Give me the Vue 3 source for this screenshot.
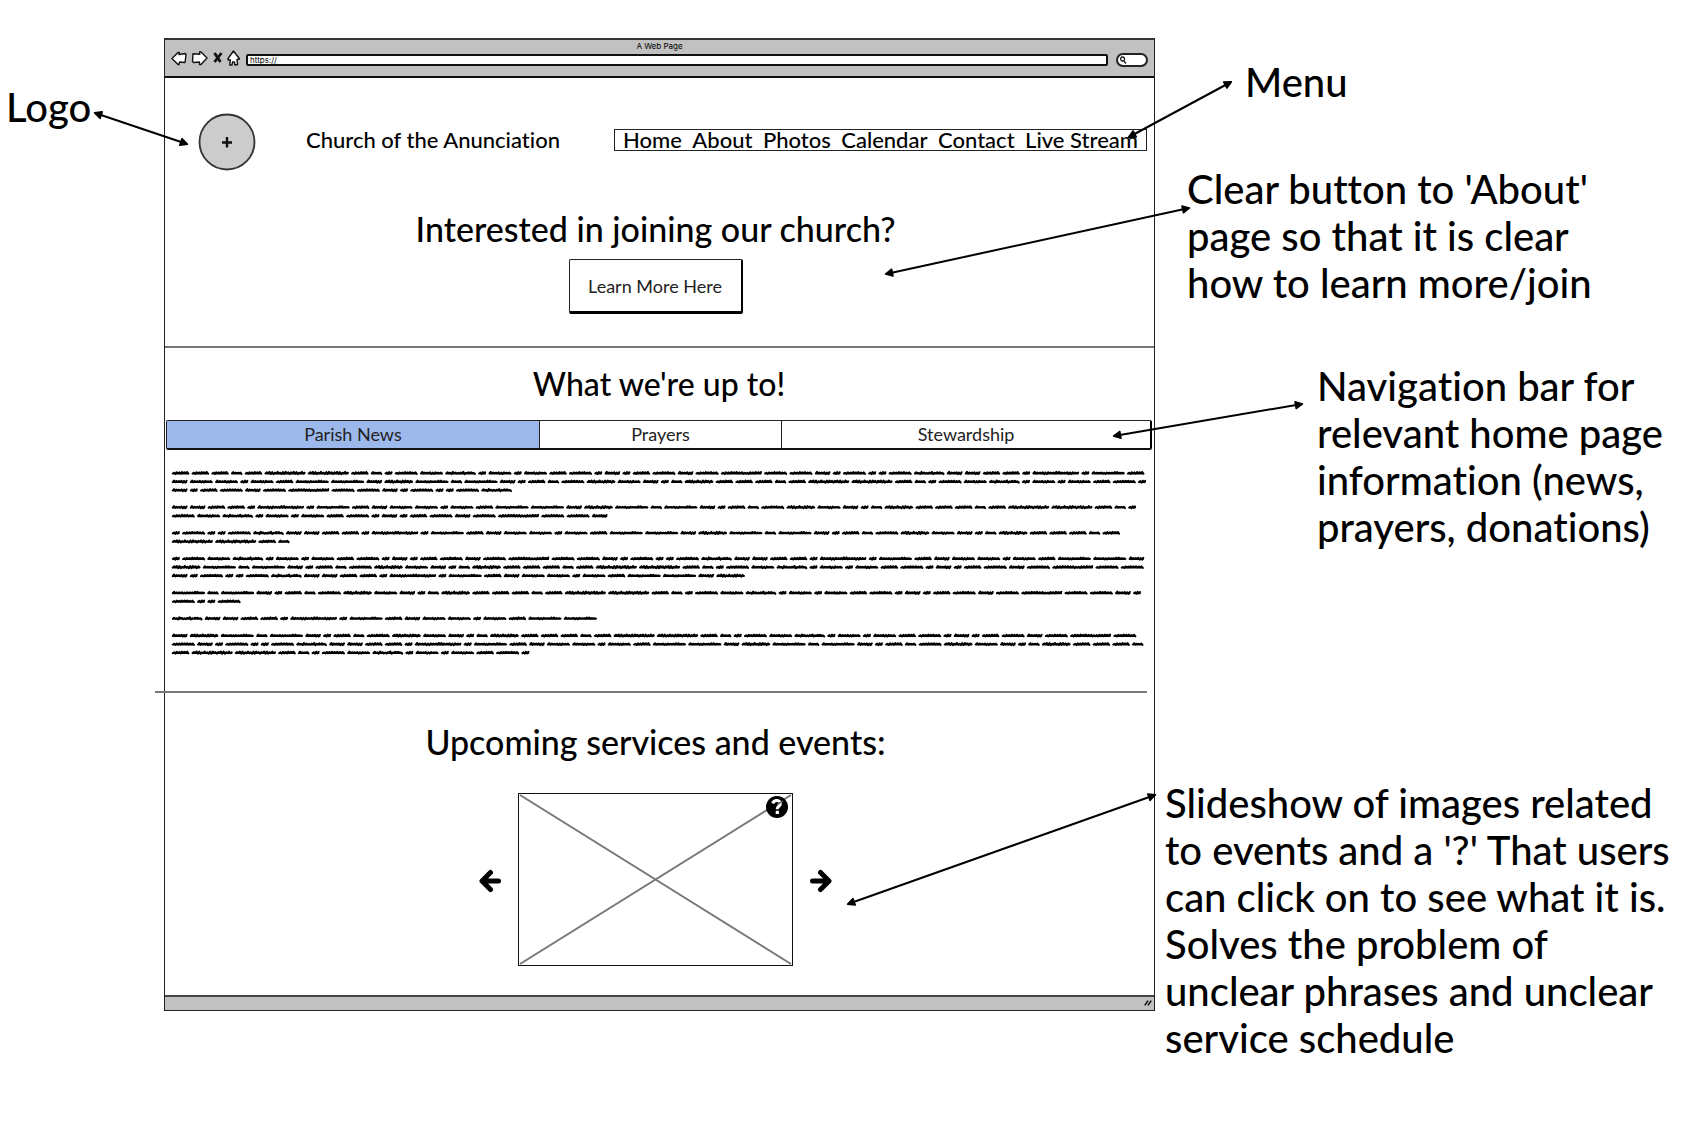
<script setup>
const menu = ['Home', 'About', 'Photos', 'Calendar', 'Contact', 'Live Stream']

const tabs = [
  { id: 'news', label: 'Parish News', active: true },
  { id: 'prayers', label: 'Prayers', active: false },
  { id: 'stewardship', label: 'Stewardship', active: false }
]

const notes = [
  { id: 'menu', text: 'Menu' },
  { id: 'about', text: "Clear button to 'About'\npage so that it is clear\nhow to learn more/join" },
  { id: 'tabs', text: 'Navigation bar for\nrelevant home page\ninformation (news,\nprayers, donations)' },
  {
    id: 'slides',
    text: "Slideshow of images related\nto events and a '?' That users\ncan click on to see what it is.\nSolves the problem of\nunclear phrases and unclear\nservice schedule"
  }
]

const pointers = [
  [95, 113, 187, 144],
  [1231, 82, 1129, 137],
  [1189, 208, 886, 274],
  [1302, 404, 1114, 436],
  [1155, 795, 848, 904]
]

// Scribbled filler copy: each letter is a word of a given width, repeated in a cycle.
const wordPitch = { E: 10.25, C: 13.7, B: 17.95, A: 19.78, F: 25.34, G: 25.34, M: 31, H: 33, L: 35.5, D: 43.4, J: 43.4, K: 49 }
const cycle = 'AAACADDACEFGHEGEGAFEBEAFBFJFFBEFEEFHBBAAEKELABGGEGALLBMLCLBEACFMGBECM'
const gap = 2.6
const rowStep = 60 / 7
const paragraphs = [[45, 44, 16], [43, 20], [44, 4], [45, 44, 26], [45, 4], [18], [44, 45, 16]]

function scribble(kind, x, y) {
  const w = wordPitch[kind] - gap
  const seed = kind.charCodeAt(0)
  const n = Math.max(5, Math.round(w / 1.4))
  let d = `M${(x + 0.8).toFixed(1)} ${(y + 0.5).toFixed(1)}`
  for (let i = 1; i <= n; i++) {
    const amp = 0.2 + ((seed * 7 + i * i * 5) % 9) / 9
    const px = x + 0.8 + ((w - 1.6) * i) / n
    d += `L${px.toFixed(1)} ${(y + (i % 2 ? -amp : amp)).toFixed(1)}`
  }
  return d + `M${(x + 1).toFixed(1)} ${(y + 0.4).toFixed(1)}h${(w - 2).toFixed(1)}`
}

function layOut() {
  const paths = []
  let word = 0
  let row = 0
  for (const rows of paragraphs) {
    for (const count of rows) {
      let x = 1
      let d = ''
      for (let i = 0; i < count; i++) {
        const kind = cycle[word % cycle.length]
        d += scribble(kind, x, 4 + row * rowStep)
        x += wordPitch[kind]
        word++
      }
      paths.push(d)
      row++
    }
    row++
  }
  return paths
}

const copyRows = layOut()
const copyHeight = 188
</script>

<template>
  <main class="board">
    <aside class="left-note">
      <p class="note">Logo</p>
    </aside>

    <section class="window">
      <div class="chrome">
        <p class="chrome-title">A Web Page</p>
        <div class="toolbar">
          <svg class="tools" viewBox="0 0 72 18" aria-hidden="true">
            <g fill="#fff" stroke="#111" stroke-width="1.4" stroke-linejoin="round">
              <path d="M2 9.500 8 3.500 9.300 3.500 9 5.500 15.500 4.500 16 6 15 13.500 9.500 13 9 15.500 8 15.500Z" />
              <path d="M37 9 31 3 29.500 3 29.800 5.300 23 4.800 22.500 12.500 23.500 13.500 29.500 13 29.500 15.500 31 15.500Z" />
              <path d="M63.500 2 58 9.500 58.300 11 60.300 10.800 59.800 16 62 16 62.500 13 64.300 13 65 16 67.500 15.500 67 10.500 69.500 10 68.500 8.500Z" />
            </g>
            <path d="M44.500 4 50.500 13M51.500 4 44.500 13" fill="none" stroke="#111" stroke-width="2.800" />
          </svg>
          <input class="url" type="text" value="https://" aria-label="Address" />
          <label class="search">
            <svg viewBox="0 0 8 8" aria-hidden="true">
              <path d="M3.500 1a2 2 0 1 0 .1 0M4.800 5 7 7.500" fill="none" stroke="#111" stroke-width="1.300" />
            </svg>
            <input type="search" aria-label="Search" />
          </label>
        </div>
      </div>

      <header class="masthead">
        <svg class="logo" viewBox="0 0 58 58" role="img" aria-label="Logo">
          <circle cx="29" cy="29" r="27.500" fill="#ccc" stroke="#333" stroke-width="1.800" />
          <path d="M29 24V34.500M24 29.500H34" stroke="#111" stroke-width="2.400" />
        </svg>
        <p class="site-name">Church of the Anunciation</p>
        <nav class="site-menu" aria-label="Main">
          <a v-for="item in menu" :key="item" href="#">{{ item }}</a>
        </nav>
      </header>

      <section class="hero">
        <h1>Interested in joining our church?</h1>
        <button type="button" class="cta">Learn More Here</button>
      </section>
      <hr />

      <section class="updates">
        <h2>What we're up to!</h2>
        <div class="tab-bar" role="tablist">
          <button v-for="tab in tabs" :key="tab.id" type="button" role="tab" :aria-selected="tab.active"
            :class="['tab', { active: tab.active }]">{{ tab.label }}</button>
        </div>
        <svg class="copy" :viewBox="`0 0 978 ${copyHeight}`" aria-hidden="true">
          <path v-for="(d, i) in copyRows" :key="i" :d="d" />
        </svg>
      </section>
      <hr class="shifted" />

      <section class="events">
        <h2>Upcoming services and events:</h2>
        <div class="slideshow">
          <button type="button" class="step" aria-label="Previous">
            <svg viewBox="0 0 24 24"><path d="M12.500 3.500 4 12 12.500 20.500M4.500 12H20.500" /></svg>
          </button>
          <div class="slide">
            <svg class="cross" viewBox="0 0 272 171" preserveAspectRatio="none" aria-hidden="true">
              <path d="M1 1 271 170M1 170 271 1" />
            </svg>
            <button type="button" class="help" aria-label="What is this?">
              <svg viewBox="0 0 22 22">
                <circle cx="11" cy="11" r="11" />
                <path d="M6.800 7.500C8 3.200 15 3.800 14.300 8 14 10.500 11.200 10.200 11.200 13.200" fill="none" stroke="#fff" stroke-width="3" />
                <path d="M9.700 14.800h3.200v3.200h-3.200z" fill="#fff" />
                <path d="M11 8.600 17 4.900" stroke="#555" stroke-width="1.300" fill="none" />
              </svg>
            </button>
          </div>
          <button type="button" class="step" aria-label="Next">
            <svg viewBox="0 0 24 24"><path d="M11.500 3.500 20 12 11.500 20.500M19.500 12H3.500" /></svg>
          </button>
        </div>
      </section>

      <footer class="status">
        <svg viewBox="0 0 10 10" aria-hidden="true">
          <path d="M1 8 5 2M5 8 9 2" stroke="#111" stroke-width="2" />
        </svg>
      </footer>
    </section>

    <aside class="notes">
      <p v-for="n in notes" :key="n.id" :class="['note', `note-${n.id}`]">{{ n.text }}</p>
    </aside>

    <svg class="pointers" viewBox="0 0 1708 1132" aria-hidden="true">
      <defs>
        <marker id="head" viewBox="0 0 10 10" refX="8" refY="5" markerWidth="10" markerHeight="10"
          markerUnits="userSpaceOnUse" orient="auto-start-reverse">
          <path d="M1.500 1.500 8.500 5 1.500 8.500Z" stroke="#000" stroke-width="1.500" stroke-linejoin="round" />
        </marker>
      </defs>
      <line v-for="(p, i) in pointers" :key="i" :x1="p[0]" :y1="p[1]" :x2="p[2]" :y2="p[3]"
        marker-start="url(#head)" marker-end="url(#head)" />
    </svg>
  </main>
</template>

<style>
body {
  margin: 0;
  background: #fff;
}
</style>

<style scoped>
.board {
  position: relative;
  display: grid;
  grid-template-columns: 164px minmax(0, 991fr) minmax(0, 553fr);
  align-items: start;
  min-height: 100vh;
  font-family: Lato, "Open Sans", sans-serif;
  font-variant-ligatures: none;
  color: #000;
}

.board * {
  box-sizing: border-box;
}

p,
h1,
h2 {
  margin: 0;
  font-weight: 500;
}

button,
input {
  margin: 0;
  font: inherit;
  font-variant-ligatures: none;
  color: inherit;
}

.note {
  font-size: 40px;
  line-height: 47px;
  white-space: pre;
}

.left-note {
  padding: 84px 0 0 6px;
}

.notes {
  padding-top: 59px;
}

.note-menu {
  padding-left: 90px;
}

.note-about {
  margin-top: 60px;
  padding-left: 32px;
}

.note-tabs {
  margin-top: 56px;
  padding-left: 162px;
}

.note-slides {
  margin-top: 229px;
  padding-left: 10px;
}

.window {
  margin-top: 38px;
  border: 1px solid #222;
  border-top: 2px solid #333;
}

.chrome {
  height: 38px;
  background: #c1c1c1;
  border-bottom: 2px solid #111;
}

.chrome-title {
  font: 8px/12px Inter, sans-serif;
  text-align: center;
}

.toolbar {
  display: flex;
  align-items: center;
  gap: 8px;
  height: 12px;
  padding: 0 6px 0 5px;
}

.tools {
  flex: none;
  width: 72px;
  height: 18px;
}

.url {
  flex: 1;
  min-width: 0;
  height: 12px;
  margin: 4px 0 0 -4px;
  padding: 0 2px;
  border: 2px solid #111;
  border-radius: 2px;
  background: #fff;
  font: 8px/8px Inter, sans-serif;
}

.search {
  display: flex;
  align-items: center;
  flex: none;
  width: 32px;
  height: 14px;
  margin-top: 4px;
  padding-left: 1px;
  border: 2px solid #222;
  border-radius: 8px;
  background: #fff;
}

.search svg {
  flex: none;
  width: 8px;
  height: 8px;
}

.search input {
  width: 16px;
  height: 8px;
  padding: 0;
  border: 0;
  outline: 0;
  background: none;
  font-size: 8px;
}

.masthead {
  display: flex;
  align-items: center;
  margin-top: 35px;
  padding: 0 7px 0 33px;
}

.logo {
  flex: none;
  width: 58px;
  height: 58px;
}

.site-name {
  margin: 0 0 4px 50px;
  font-size: 22px;
  line-height: 26px;
  white-space: nowrap;
}

.site-menu {
  display: flex;
  align-items: center;
  justify-content: space-between;
  width: 533px;
  height: 22px;
  margin: 0 0 4px auto;
  padding: 0 8px;
  border: 1px solid #222;
}

.site-menu a {
  color: inherit;
  font-size: 22px;
  font-weight: 500;
  line-height: 20px;
  text-decoration: none;
  white-space: nowrap;
}

.hero {
  display: flex;
  flex-direction: column;
  align-items: center;
  margin-top: 38px;
  padding: 0 8px 32px 0;
}

h1,
h2 {
  font-size: 34px;
  line-height: 40px;
  text-align: center;
}

.updates h2 {
  font-size: 32px;
}

.cta {
  width: 174px;
  height: 55px;
  margin-top: 10px;
  padding: 0;
  border: 1px solid #222;
  border-right: 2px solid #000;
  border-bottom: 3px solid #000;
  border-radius: 2px;
  background: #fff;
  font-size: 18px;
  color: #222;
}

hr {
  height: 2px;
  margin: 0;
  border: 0;
  background: #777;
}

.shifted {
  margin: 0 7px 0 -10px;
}

.updates {
  padding: 16px 2px 34px 1px;
}

.tab-bar {
  display: grid;
  grid-template-columns: 373fr 243fr 370fr;
  height: 30px;
  margin-top: 16px;
  border: 1px solid #222;
  border-right: 2px solid #000;
  border-bottom: 2px solid #111;
  border-radius: 2px;
}

.tab {
  padding: 0 0 2px;
  border: 0;
  border-left: 1px solid #222;
  background: #fff;
  font-size: 18px;
  line-height: 24px;
  color: #222;
}

.tab.active {
  border-left: 0;
  background: #9db9ec;
}

.copy {
  display: block;
  width: calc(100% - 10px);
  margin: 19px 0 0 5px;
}

.copy path {
  fill: none;
  stroke: #000;
  stroke-width: 2px;
  stroke-linejoin: round;
  stroke-linecap: round;
}

.events {
  padding: 29px 8px 29px 0;
}

.slideshow {
  display: flex;
  justify-content: center;
  align-items: center;
  gap: 16px;
  margin-top: 31px;
}

.step {
  width: 24px;
  height: 24px;
  margin-top: 4px;
  padding: 0;
  border: 0;
  background: none;
}

.step svg,
.help svg {
  display: block;
}

.step path {
  fill: none;
  stroke: #000;
  stroke-width: 5px;
  stroke-linecap: round;
  stroke-linejoin: round;
}

.slide {
  position: relative;
  width: 275px;
  height: 173px;
  border: 1px solid #111;
}

.cross {
  display: block;
  width: 100%;
  height: 100%;
}

.cross path {
  stroke: #777;
  stroke-width: 2px;
}

.help {
  position: absolute;
  top: 2px;
  right: 4px;
  width: 22px;
  height: 22px;
  padding: 0;
  border: 0;
  background: none;
}

.status {
  display: flex;
  justify-content: flex-end;
  align-items: center;
  height: 15px;
  padding-right: 2px;
  border-top: 2px solid #444;
  background: #c1c1c1;
}

.status svg {
  width: 8px;
  height: 8px;
}

.pointers {
  position: absolute;
  top: 0;
  left: 0;
  width: 100%;
  pointer-events: none;
}

.pointers line {
  stroke: #000;
  stroke-width: 2px;
}
</style>
